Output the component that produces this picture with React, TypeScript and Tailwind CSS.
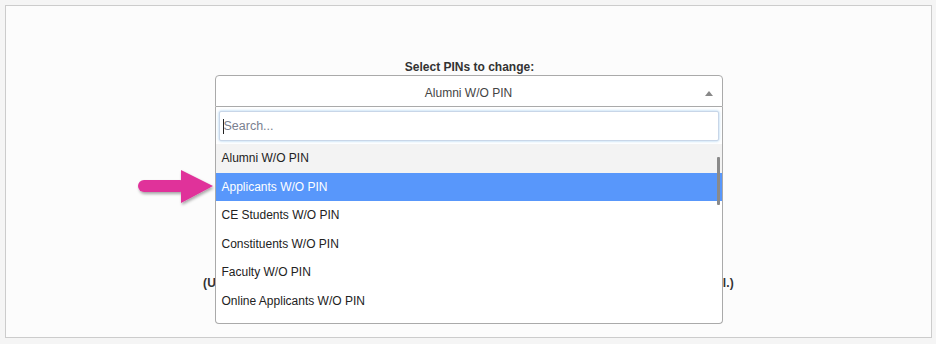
import React from 'react';

const options = [
  'Alumni W/O PIN',
  'Applicants W/O PIN',
  'CE Students W/O PIN',
  'Constituents W/O PIN',
  'Faculty W/O PIN',
  'Online Applicants W/O PIN',
  'Staff W/O PIN',
];

const App: React.FC = () => {
  return (
    <div className="w-[936px] h-[344px] bg-[#f5f5f5] pt-[5px] pl-[5px] font-['Liberation_Sans',Arial,sans-serif] text-[12px] text-[#333] relative overflow-hidden">
      <div className="w-[927px] h-[333px] border border-[#cccccc] bg-[#fcfcfc] pt-[54px] flex flex-col items-center">
        <div className="font-bold leading-[14px] text-[#333] ml-[2px]">Select PINs to change:</div>

        {/* select2 style dropdown */}
        <div className="relative mt-[1px] w-[508px]">
          <div className="h-[32px] border border-[#aaaaaa] rounded-t-[4px] bg-white flex items-center justify-center relative">
            <span className="text-[#444] leading-[32px] pt-[3px]">Alumni W/O PIN</span>
            <span className="absolute right-[9px] top-[15px] w-0 h-0 border-l-[4px] border-r-[4px] border-b-[5px] border-l-transparent border-r-transparent border-b-[#888]" />
          </div>

          <div className="absolute left-0 top-full w-[508px] h-[217px] border border-t-0 border-[#aaaaaa] rounded-b-[4px] bg-white z-10 flex flex-col">
            <div className="px-[3px] pt-[4px] pb-[3px]">
              <div className="h-[30px] border border-[#c8d6e8] rounded-[2px] bg-white shadow-[0_0_3px_rgba(102,175,233,0.6)] flex items-center pl-[3px]">
                <span className="w-px h-[15px] bg-[#222]" />
                <span className="text-[#7a8190] text-[12.5px] leading-[15px]">Search...</span>
              </div>
            </div>
            <div className="relative flex-1 overflow-hidden">
              {options.map((o, i) => (
                <div
                  key={o}
                  className={
                    'h-[28.5px] flex items-center pl-[6px] ' +
                    (i === 0 ? 'bg-[#f3f3f3] text-[#222]' : i === 1 ? 'bg-[#5897fb] text-white' : 'text-[#222]')
                  }
                >
                  {i < 6 ? o : ''}
                </div>
              ))}
              <div className="absolute right-[2px] top-[13px] w-[3px] h-[48px] bg-[#8a8a8a] rounded-[1px]" />
            </div>
          </div>
        </div>

        <div className="mt-[169px] font-bold leading-[14px] tracking-[0.17px] text-[#333] whitespace-nowrap">
          (Use Ctrl+Click to select more than one group. New PINs will be sent to each user's email.)
        </div>
      </div>

      {/* annotation arrow */}
      <svg className="absolute left-[134px] top-[166px]" width="86" height="44" viewBox="0 0 86 44">
        <defs>
          <filter id="sh" x="-20%" y="-30%" width="140%" height="160%">
            <feDropShadow dx="1" dy="2" stdDeviation="1.5" floodColor="#000" floodOpacity="0.35" />
          </filter>
        </defs>
        <g filter="url(#sh)" fill="#e0309a">
          <rect x="4" y="14" width="48" height="12" rx="6" />
          <polygon points="47,4 79,20 47,37" />
        </g>
      </svg>
    </div>
  );
};

export default App;
